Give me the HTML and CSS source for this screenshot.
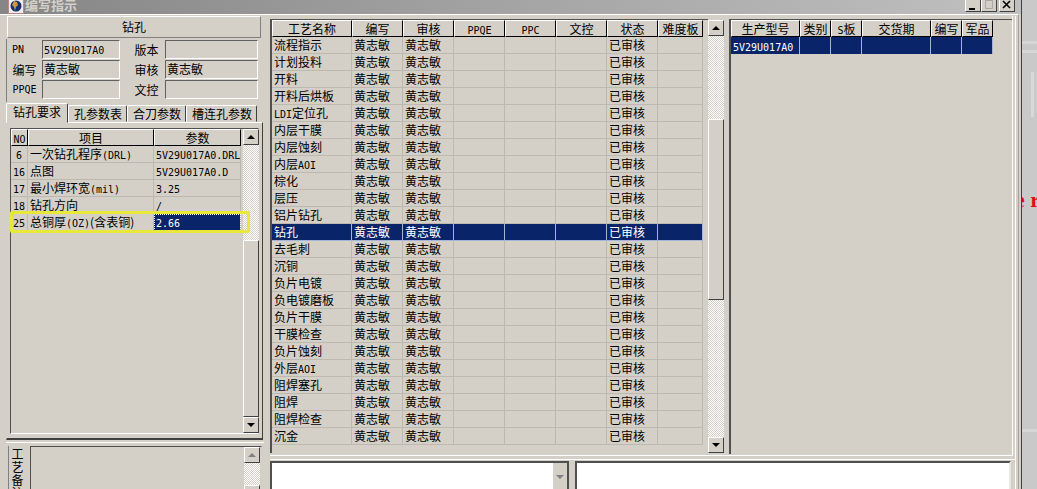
FILE: index.html
```html
<!DOCTYPE html>
<html lang="zh-CN">
<head>
    <meta charset="UTF-8">
    <title>编写指示</title>
    <link rel="stylesheet" href="styles.css">
</head>
<body>
    <div class="window">
        <div class="titlebar">
            <svg class="app-icon" width="16" height="14" viewBox="0 0 16 14">
                <rect x="0" y="0" width="16" height="14" fill="#b98a8a"/>
                <rect x="1" y="0" width="14" height="13" fill="#f2ecec"/>
                <circle cx="8" cy="6" r="5.5" fill="#14306f"/>
                <path d="M6 1l3 1 1 3-2 2-1 4-1-4-2-2z" fill="#c99a3a"/>
            </svg>
            <span class="title">编写指示</span>
            <div class="win-btns">
                <span class="win-btn"><svg width="14" height="12" viewBox="0 0 14 12"><rect x="3" y="9" width="6" height="2" fill="#000"/></svg></span>
                <span class="win-btn"><svg width="14" height="12" viewBox="0 0 14 12"><path d="M3.5 1.5h7v8h-7z" fill="none" stroke="#a8a8a8"/></svg></span>
                <span class="win-btn win-close"><svg width="14" height="12" viewBox="0 0 14 12"><path d="M3 2l7 7M10 2l-7 7" stroke="#000" stroke-width="1.6"/></svg></span>
            </div>
        </div>

        <div class="client">
            <div class="left">
                <div class="caption">钻孔</div>
                <div class="info">
                    <span class="lbl lbl-pn"><span class="lat">PN</span></span><span class="field"><span class="lat">5V29U017A0</span></span>
                    <span class="lbl lbl-2">版本</span><span class="field"></span>
                    <span class="lbl">编写</span><span class="field">黄志敏</span>
                    <span class="lbl lbl-2">审核</span><span class="field">黄志敏</span>
                    <span class="lbl"><span class="lat">PPQE</span></span><span class="field"></span>
                    <span class="lbl lbl-2">文控</span><span class="field"></span>
                </div>
                <div class="tabs">
                    <span class="tab tab-on">钻孔要求</span>
                    <span class="tab">孔参数表</span>
                    <span class="tab">合刀参数</span>
                    <span class="tab">槽连孔参数</span>
                </div>
                <div class="tab-pane">
                    <div class="grid-wrap req-wrap">
                        <table class="grid req-grid">
                            <colgroup><col class="c-no"><col class="c-item"><col class="c-param"></colgroup>
                            <thead><tr><th><span class="lat">NO</span></th><th>项目</th><th>参数</th></tr></thead>
                            <tbody>
                                <tr><td class="num"><span class="lat">6</span></td><td>一次钻孔程序<span class="lat">(DRL)</span></td><td><span class="lat">5V29U017A0.DRL</span></td></tr>
                                <tr><td class="num"><span class="lat">16</span></td><td>点图</td><td><span class="lat">5V29U017A0.D</span></td></tr>
                                <tr><td class="num"><span class="lat">17</span></td><td>最小焊环宽<span class="lat">(mil)</span></td><td><span class="lat">3.25</span></td></tr>
                                <tr><td class="num"><span class="lat">18</span></td><td>钻孔方向</td><td><span class="lat">/</span></td></tr>
                                <tr><td class="num"><span class="lat">25</span></td><td>总铜厚<span class="lat">(OZ)</span>(含表铜)</td><td class="focus"><span class="lat">2.66</span></td></tr>
                            </tbody>
                        </table>
                        <div class="vscroll req-scroll">
                            <span class="sb-btn"><i class="arrow-up"></i></span>
                            <span class="sb-track sb-t1"></span>
                            <span class="sb-thumb"></span>
                            <span class="sb-btn"><i class="arrow-down"></i></span>
                        </div>
                    </div>
                    <div class="marker"></div>
                </div>
                <div class="note">
                    <div class="note-tab">工艺备注</div>
                    <div class="note-box">
                        <div class="vscroll note-scroll">
                            <span class="sb-btn"><i class="arrow-up arrow-off"></i></span>
                            <span class="sb-track"></span>
                            <span class="sb-btn"><i class="arrow-down arrow-off"></i></span>
                        </div>
                    </div>
                </div>
            </div>

            <div class="right">
                <div class="top">
                    <div class="mid">
                        <div class="mid-grid">
                            <table class="grid flow-grid">
                                <colgroup><col class="c-name"><col class="c-50"><col class="c-50"><col class="c-50"><col class="c-50"><col class="c-50"><col class="c-50"><col class="c-hard"></colgroup>
                                <thead><tr><th>工艺名称</th><th>编写</th><th>审核</th><th><span class="lat">PPQE</span></th><th><span class="lat">PPC</span></th><th>文控</th><th>状态</th><th>难度板</th></tr></thead>
                                <tbody>
                                    <tr><td>流程指示</td><td>黄志敏</td><td>黄志敏</td><td></td><td></td><td></td><td>已审核</td><td></td></tr>
                                    <tr><td>计划投料</td><td>黄志敏</td><td>黄志敏</td><td></td><td></td><td></td><td>已审核</td><td></td></tr>
                                    <tr><td>开料</td><td>黄志敏</td><td>黄志敏</td><td></td><td></td><td></td><td>已审核</td><td></td></tr>
                                    <tr><td>开料后烘板</td><td>黄志敏</td><td>黄志敏</td><td></td><td></td><td></td><td>已审核</td><td></td></tr>
                                    <tr><td><span class="lat">LDI</span>定位孔</td><td>黄志敏</td><td>黄志敏</td><td></td><td></td><td></td><td>已审核</td><td></td></tr>
                                    <tr><td>内层干膜</td><td>黄志敏</td><td>黄志敏</td><td></td><td></td><td></td><td>已审核</td><td></td></tr>
                                    <tr><td>内层蚀刻</td><td>黄志敏</td><td>黄志敏</td><td></td><td></td><td></td><td>已审核</td><td></td></tr>
                                    <tr><td>内层<span class="lat">AOI</span></td><td>黄志敏</td><td>黄志敏</td><td></td><td></td><td></td><td>已审核</td><td></td></tr>
                                    <tr><td>棕化</td><td>黄志敏</td><td>黄志敏</td><td></td><td></td><td></td><td>已审核</td><td></td></tr>
                                    <tr><td>层压</td><td>黄志敏</td><td>黄志敏</td><td></td><td></td><td></td><td>已审核</td><td></td></tr>
                                    <tr><td>铝片钻孔</td><td>黄志敏</td><td>黄志敏</td><td></td><td></td><td></td><td>已审核</td><td></td></tr>
                                    <tr class="sel"><td>钻孔</td><td>黄志敏</td><td>黄志敏</td><td></td><td></td><td></td><td>已审核</td><td></td></tr>
                                    <tr><td>去毛刺</td><td>黄志敏</td><td>黄志敏</td><td></td><td></td><td></td><td>已审核</td><td></td></tr>
                                    <tr><td>沉铜</td><td>黄志敏</td><td>黄志敏</td><td></td><td></td><td></td><td>已审核</td><td></td></tr>
                                    <tr><td>负片电镀</td><td>黄志敏</td><td>黄志敏</td><td></td><td></td><td></td><td>已审核</td><td></td></tr>
                                    <tr><td>负电镀磨板</td><td>黄志敏</td><td>黄志敏</td><td></td><td></td><td></td><td>已审核</td><td></td></tr>
                                    <tr><td>负片干膜</td><td>黄志敏</td><td>黄志敏</td><td></td><td></td><td></td><td>已审核</td><td></td></tr>
                                    <tr><td>干膜检查</td><td>黄志敏</td><td>黄志敏</td><td></td><td></td><td></td><td>已审核</td><td></td></tr>
                                    <tr><td>负片蚀刻</td><td>黄志敏</td><td>黄志敏</td><td></td><td></td><td></td><td>已审核</td><td></td></tr>
                                    <tr><td>外层<span class="lat">AOI</span></td><td>黄志敏</td><td>黄志敏</td><td></td><td></td><td></td><td>已审核</td><td></td></tr>
                                    <tr><td>阻焊塞孔</td><td>黄志敏</td><td>黄志敏</td><td></td><td></td><td></td><td>已审核</td><td></td></tr>
                                    <tr><td>阻焊</td><td>黄志敏</td><td>黄志敏</td><td></td><td></td><td></td><td>已审核</td><td></td></tr>
                                    <tr><td>阻焊检查</td><td>黄志敏</td><td>黄志敏</td><td></td><td></td><td></td><td>已审核</td><td></td></tr>
                                    <tr><td>沉金</td><td>黄志敏</td><td>黄志敏</td><td></td><td></td><td></td><td>已审核</td><td></td></tr>
                                </tbody>
                            </table>
                        </div>
                        <div class="vscroll flow-scroll">
                            <span class="sb-btn"><i class="arrow-up"></i></span>
                            <span class="sb-track sb-t2"></span>
                            <span class="sb-thumb sb-thumb-fixed"></span>
                            <span class="sb-track"></span>
                            <span class="sb-btn"><i class="arrow-down"></i></span>
                        </div>
                    </div>
                    <div class="side">
                        <table class="grid model-grid">
                            <colgroup><col class="c-model"><col class="c-31"><col class="c-31"><col class="c-date"><col class="c-31"><col class="c-31"></colgroup>
                            <thead><tr><th>生产型号</th><th>类别</th><th><span class="lat">S</span>板</th><th>交货期</th><th>编写</th><th>军品</th></tr></thead>
                            <tbody>
                                <tr class="sel"><td><span class="lat">5V29U017A0</span></td><td></td><td></td><td></td><td></td><td></td></tr>
                            </tbody>
                        </table>
                    </div>
                </div>
                <div class="bottom">
                    <div class="memo memo-a">
                        <div class="memo-text"></div>
                        <div class="memo-btn"><i class="arrow-down arrow-off"></i></div>
                    </div>
                    <div class="memo memo-b"></div>
                </div>
            </div>
        </div>
    </div>
    <div class="desktop"><span class="stray">e r</span></div>
</body>
</html>
```

FILE: styles.css
```css
* {
    box-sizing: border-box;
}
html, body {
    margin: 0;
    height: 489px;
    overflow: hidden;
}
body {
    display: flex;
    background: #c8c8c8;
    font-family: "Noto Sans CJK SC", sans-serif;
    font-size: 12px;
    line-height: 16px;
    color: #000;
}
.lat {
    font-family: "DejaVu Sans Mono", monospace;
    font-size: 10px;
    line-height: 1;
}
.window {
    width: 1022px;
    height: 489px;
    flex: none;
    background: #d4d0c8;
    border-right: 1px solid #404040;
    overflow: hidden;
}
.desktop {
    flex: 1;
    padding-top: 192px;
    overflow: hidden;
    background-color: #c9c9c9;
    background-image:
        linear-gradient(#d6d6d6, #d6d6d6),
        linear-gradient(#d6d6d6, #d6d6d6),
        linear-gradient(#d9d9d9, #d9d9d9),
        linear-gradient(#d6d6d6, #d6d6d6);
    background-repeat: no-repeat;
    background-size: 15px 3px, 15px 3px, 3px 45px, 15px 3px;
    background-position: 0 41px, 0 50px, 9px 72px, 0 429px;
}
.stray {
    display: block;
    margin-left: -7px;
    color: #e01010;
    font-family: "Liberation Serif", serif;
    font-size: 22px;
    font-weight: bold;
    white-space: nowrap;
}

/* title bar */
.titlebar {
    height: 14px;
    display: flex;
    align-items: flex-start;
    padding: 0 6px 0 8px;
    overflow: hidden;
    background: linear-gradient(to right, #868686, #a4a4a4 50%, #c0c0c0);
}
.title {
    margin: -3px 0 0 1px;
    color: #d4d0c8;
    font-weight: bold;
    font-size: 13px;
}
.win-btns {
    margin-left: auto;
    margin-top: -2px;
    display: flex;
}
.win-btn {
    width: 16px;
    height: 14px;
    background: #d4d0c8;
    border: 1px solid;
    border-color: #fff #404040 #404040 #fff;
    display: flex;
}
.win-close {
    margin-left: 2px;
}
.client {
    display: flex;
    height: 475px;
    margin-right: 2px;
    border-top: 1px solid #fff;
    border-right: 1px solid #a8a49c;
    padding: 1px 2px 0 6px;
}

/* left column */
.left {
    width: 258px;
    flex: none;
}
.caption {
    height: 22px;
    margin-left: 1px;
    width: 254px;
    text-align: center;
    line-height: 20px;
    border: 1px solid;
    border-color: #fff #808080 #808080 #fff;
}
.info {
    height: 63px;
    margin-top: 1px;
    padding: 1px 3px 0 0;
    display: grid;
    grid-template-columns: 35px 78px 45px 93px;
    grid-auto-rows: 20px;
    border-left: 1px solid #808080;
}
.lbl {
    display: flex;
    align-items: center;
    justify-content: center;
}
.lbl-pn {
    justify-content: flex-start;
    padding-left: 5px;
}
.lbl-2 {
    padding-left: 8px;
}
.field {
    height: 19px;
    padding-left: 1px;
    border: 1px solid;
    border-color: #606060 #fff #fff #606060;
    line-height: 16px;
    white-space: nowrap;
}
.tabs {
    display: flex;
    height: 20px;
    align-items: flex-end;
}
.tab {
    height: 17px;
    padding: 0 4px 0 5px;
    border: 1px solid;
    border-color: #fff #404040 transparent #fff;
    border-radius: 2px 2px 0 0;
    white-space: nowrap;
    line-height: 16px;
}
.tab-on {
    height: 20px;
    padding: 0 6px;
    position: relative;
    top: 1px;
    background: #d4d0c8;
    z-index: 1;
}
.tab-pane {
    position: relative;
    height: 318px;
    width: 257px;
    padding: 5px 3px 0 3px;
    border: 1px solid;
    border-color: #fff #404040 #404040 transparent;
    border-bottom-width: 2px;
}
.grid-wrap {
    display: flex;
    height: 306px;
}
.req-wrap {
    border: 1px solid;
    border-color: #505050 transparent #fff #505050;
}
.vscroll {
    display: flex;
    flex-direction: column;
    flex: none;
    width: 16px;
}
.req-scroll {
    margin-left: 2px;
}
.sb-btn {
    width: 16px;
    height: 16px;
    flex: none;
    background: #d4d0c8;
    border: 1px solid;
    border-color: #fff #404040 #404040 #fff;
    display: flex;
    align-items: center;
    justify-content: center;
}
.arrow-up, .arrow-down {
    width: 0;
    height: 0;
    border-left: 4px solid transparent;
    border-right: 4px solid transparent;
}
.arrow-up {
    border-bottom: 4px solid #000;
}
.arrow-down {
    border-top: 4px solid #000;
}
.arrow-up.arrow-off {
    border-bottom-color: #808080;
}
.arrow-down.arrow-off {
    border-top-color: #808080;
}
.sb-track {
    flex: 1;
    background-color: #d4d0c8;
    background-image: conic-gradient(#fff 25%, #d4d0c8 0 50%, #fff 0 75%, #d4d0c8 0);
    background-size: 2px 2px;
}
.sb-thumb {
    flex: 1;
    background: #d4d0c8;
    border: 1px solid;
    border-color: #fff #404040 #404040 #fff;
}
.sb-thumb-fixed {
    flex: none;
    height: 181px;
}
.sb-t1 {
    flex: none;
    height: 95px;
}
.sb-t2 {
    flex: none;
    height: 83px;
}

/* grids */
.grid {
    table-layout: fixed;
    border-collapse: separate;
    border-spacing: 0;
    white-space: nowrap;
    align-self: flex-start;
}
.grid th {
    height: 17px;
    padding: 0;
    font-weight: normal;
    line-height: 15px;
    background: #d4d0c8;
    border: 1px solid;
    border-color: #fff #000 #000 #fff;
    overflow: hidden;
}
.grid td {
    height: 17px;
    padding: 0 0 0 2px;
    border-right: 1px solid #bdb9b1;
    border-bottom: 1px solid #bdb9b1;
    overflow: hidden;
}
.grid .num {
    padding: 0;
    text-align: center;
}
.grid .sel td {
    background: #0a246a;
    color: #fff;
    border-color: #a6b4d8;
}
.grid .focus {
    background: #0a246a;
    color: #fff;
    outline: 1px dotted #fff;
    outline-offset: -1px;
}
.req-grid {
    width: 230px;
}
.c-no { width: 17px; }
.c-item { width: 126px; }
.c-param { width: 87px; }
.marker {
    position: absolute;
    left: 3px;
    top: 88px;
    width: 240px;
    height: 22px;
    border: 3px solid #e8e83a;
    border-radius: 2px;
}

/* notes under the tabs */
.note {
    display: flex;
    height: 60px;
    margin-top: 2px;
    border-top: 1px solid #fff;
    padding-top: 3px;
}
.note-tab {
    width: 22px;
    margin-left: 2px;
    padding: 2px 5px 0 0;
    writing-mode: vertical-rl;
    text-orientation: upright;
    letter-spacing: 1px;
    border-left: 1px solid #808080;
}
.note-box {
    flex: none;
    width: 232px;
    display: flex;
    justify-content: flex-end;
    border: 1px solid;
    border-color: #505050 transparent transparent #505050;
}
.note-scroll {
    margin-right: 1px;
}

/* main column */
.right {
    flex: 1;
    min-width: 0;
    display: flex;
    flex-direction: column;
    padding-left: 6px;
    border-right: 1px solid #fff;
}
.top {
    display: flex;
    height: 440px;
    flex: none;
    margin-right: 2px;
    padding-top: 3px;
    border-bottom: 1px solid #fff;
    border-right: 1px solid #fff;
}
.mid {
    display: flex;
    width: 454px;
    flex: none;
}
.mid-grid {
    width: 438px;
    height: 434px;
    border-left: 2px solid #505050;
    border-top: 1px solid #505050;
}
.flow-grid {
    width: 431px;
}
.c-name { width: 80px; }
.c-50 { width: 51px; }
.c-hard { width: 45px; }
.flow-scroll {
    margin-top: 1px;
    height: 433px;
}
.side {
    flex: 1;
    height: 435px;
    margin-left: 5px;
    border-left: 2px solid #505050;
    border-top: 1px solid #505050;
    display: flex;
}
.model-grid {
    width: 262px;
}
.c-model { width: 69px; }
.c-31 { width: 31px; }
.c-date { width: 69px; }
.model-grid tbody td {
    border-bottom: none;
}
.bottom {
    display: flex;
    margin-top: 3px;
    padding: 1px 4px 0 0;
    gap: 6px;
    border-top: 1px solid #fff;
}
.memo {
    height: 40px;
    background: #fff;
    border: 2px solid;
    border-color: #505050 #e8e8e0 transparent #505050;
}
.memo-a {
    width: 299px;
    flex: none;
    display: flex;
    border-right-color: #505050;
}
.memo-text {
    flex: 1;
}
.memo-btn {
    width: 15px;
    padding-top: 12px;
    display: flex;
    justify-content: center;
    background: #d4d0c8;
    border-left: 1px solid #fff;
}
.memo-b {
    flex: 1;
}
```
